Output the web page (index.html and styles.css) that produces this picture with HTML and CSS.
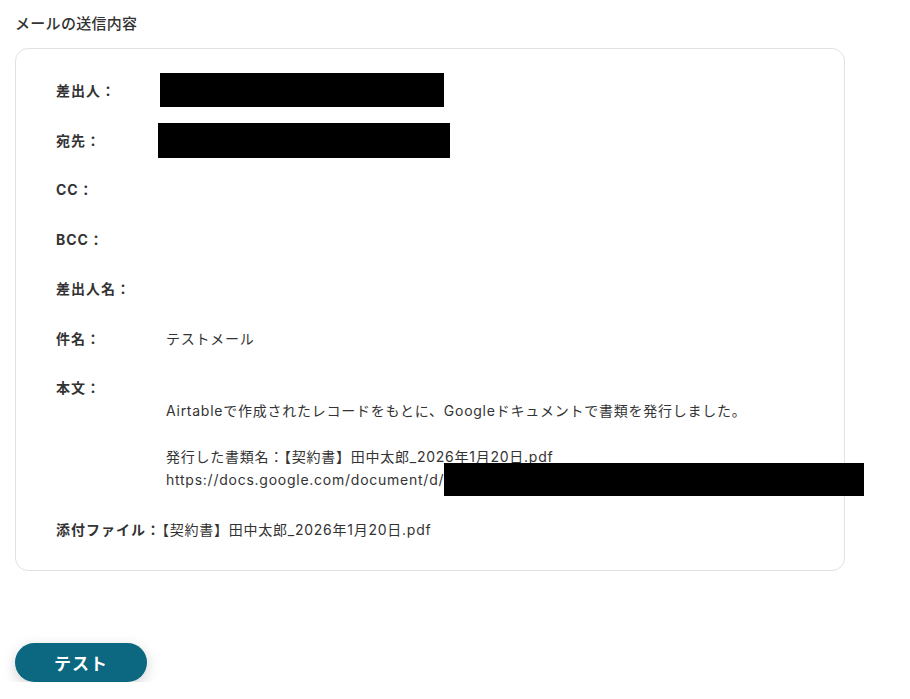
FILE: index.html
```html
<!DOCTYPE html>
<html lang="ja">
<head>
  <meta charset="UTF-8" />
  <title>メールの送信内容</title>
  <link rel="stylesheet" href="styles.css">
</head>
<body>
  <h2 class="section-title">メールの送信内容</h2>

  <div class="mail-card">
    <div class="mail-row">
      <div class="mail-label">差出人：</div>
      <div class="mail-value"><span class="redact redact-from"></span></div>
    </div>
    <div class="mail-row">
      <div class="mail-label">宛先：</div>
      <div class="mail-value"><span class="redact redact-to"></span></div>
    </div>
    <div class="mail-row">
      <div class="mail-label">CC：</div>
      <div class="mail-value"></div>
    </div>
    <div class="mail-row">
      <div class="mail-label">BCC：</div>
      <div class="mail-value"></div>
    </div>
    <div class="mail-row">
      <div class="mail-label">差出人名：</div>
      <div class="mail-value"></div>
    </div>
    <div class="mail-row">
      <div class="mail-label">件名：</div>
      <div class="mail-value">テストメール</div>
    </div>
    <div class="mail-row body-row">
      <div class="mail-label">本文：</div>
      <div class="mail-value">
        <div class="line"></div>
        <div class="line">Airtableで作成されたレコードをもとに、Googleドキュメントで書類を発行しました。</div>
        <div class="line"></div>
        <div class="line">発行した書類名：【契約書】田中太郎_2026年1月20日.pdf</div>
        <div class="line">https://docs.google.com/document/d/<span class="redact redact-url"></span></div>
      </div>
    </div>
    <div class="mail-row">
      <div class="mail-label">添付ファイル：</div>
      <div class="mail-value attach">【契約書】田中太郎_2026年1月20日.pdf</div>
    </div>
  </div>

  <button class="test-btn" type="button">テスト</button>
</body>
</html>
```

FILE: styles.css
```css
body {
  margin: 0;
  padding: 14px 15px 0 15px;
  font-family: 'Inter', 'Noto Sans CJK JP', sans-serif;
  color: #333;
  background: #fff;
}
.section-title {
  margin: 0 0 14px 0;
  height: 20px;
  font-size: 15px;
  font-weight: 500;
  line-height: 20px;
  letter-spacing: 0.3px;
  color: #333;
}
.mail-card {
  width: 830px;
  box-sizing: border-box;
  border: 1px solid #e2e2e2;
  border-radius: 13px;
  padding: 30px 40px 29px 40px;
  display: flex;
  flex-direction: column;
  gap: 26.5px;
}
.mail-row {
  display: flex;
  height: 23px;
  font-size: 14px;
  line-height: 23px;
}
.body-row {
  height: auto;
}
.mail-label {
  width: 110px;
  height: 23px;
  flex-shrink: 0;
  font-weight: 700;
  letter-spacing: 1px;
}
.mail-value {
  flex: 1;
  letter-spacing: 0.75px;
}
.line {
  height: 23px;
  white-space: nowrap;
}
.attach {
  margin-left: -11px;
}
.redact {
  display: inline-block;
  background: #000;
  vertical-align: top;
}
.redact-from {
  width: 284px;
  height: 34px;
  margin: -6px 0 0 -6px;
}
.redact-to {
  width: 292px;
  height: 35px;
  margin: -6px 0 0 -8px;
}
.redact-url {
  width: 420px;
  height: 33px;
  margin: -5px 0 0 0;
}
.test-btn {
  display: block;
  margin-top: 72px;
  width: 132px;
  height: 39px;
  border: none;
  border-radius: 20px;
  background: #0b6880;
  color: #fff;
  font-family: 'Inter', 'Noto Sans CJK JP', sans-serif;
  font-size: 17px;
  font-weight: 700;
  letter-spacing: 1px;
  box-shadow: 0 4px 14px rgba(0, 0, 0, 0.18);
  cursor: pointer;
}
```
